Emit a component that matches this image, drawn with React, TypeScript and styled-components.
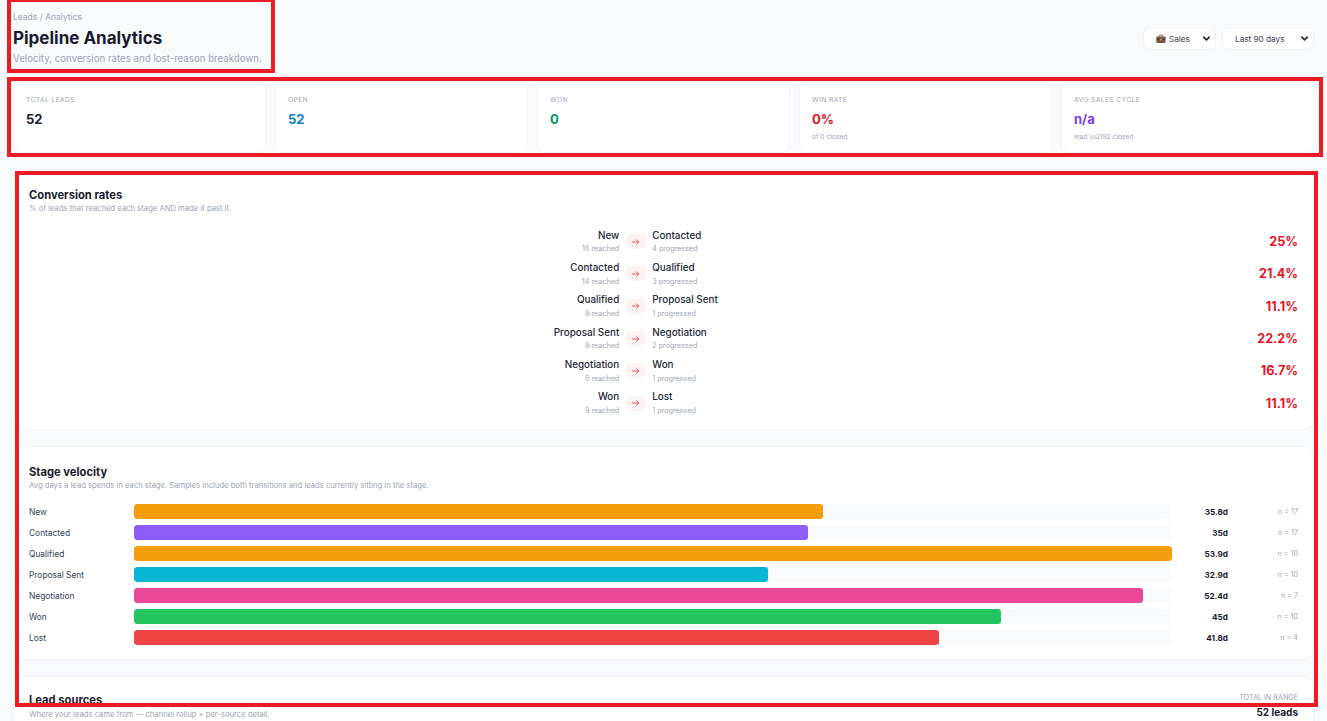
import React from 'react';
import styled, { createGlobalStyle } from 'styled-components';
import { ChevronDown } from 'lucide-react';

const GlobalStyle = createGlobalStyle`
    html, body {
        margin: 0;
        height: 721px;
        overflow: hidden;
        background: #f8fafc;
        font-family: Inter, "Liberation Sans", sans-serif;
        color: #1a1a2e;
    }
    * { box-sizing: border-box; }
`;

const conversions = [
    { from: 'New', reached: 16, to: 'Contacted', progressed: 4, rate: '25%' },
    { from: 'Contacted', reached: 14, to: 'Qualified', progressed: 3, rate: '21.4%' },
    { from: 'Qualified', reached: 9, to: 'Proposal Sent', progressed: 1, rate: '11.1%' },
    { from: 'Proposal Sent', reached: 9, to: 'Negotiation', progressed: 2, rate: '22.2%' },
    { from: 'Negotiation', reached: 6, to: 'Won', progressed: 1, rate: '16.7%' },
    { from: 'Won', reached: 9, to: 'Lost', progressed: 1, rate: '11.1%' },
];

const velocity = [
    { stage: 'New', days: 35.8, n: 17, color: '#f59e0b' },
    { stage: 'Contacted', days: 35, n: 17, color: '#8b5cf6' },
    { stage: 'Qualified', days: 53.9, n: 10, color: '#f59e0b' },
    { stage: 'Proposal Sent', days: 32.9, n: 10, color: '#06b6d4' },
    { stage: 'Negotiation', days: 52.4, n: 7, color: '#ec4899' },
    { stage: 'Won', days: 45, n: 10, color: '#22c55e' },
    { stage: 'Lost', days: 41.8, n: 4, color: '#ef4444' },
];

const maxDays = Math.max(...velocity.map((v) => v.days));

const Briefcase = () => (
    <svg width="10" height="10" viewBox="0 0 10 10">
        <path d="M3.2 2.6V1.6c0-.3.2-.5.5-.5h2.6c.3 0 .5.2.5.5v1" fill="none" stroke="#5d4037" strokeWidth="0.8" />
        <rect x="0.4" y="2.5" width="9.2" height="6.6" rx="0.8" fill="#795548" />
        <rect x="0.4" y="5.2" width="9.2" height="0.7" fill="#4e342e" />
        <rect x="4.2" y="4.7" width="1.6" height="1.6" rx="0.3" fill="#d7b98a" />
    </svg>
);

const App = () => {
    return (
        <Page>
            <GlobalStyle />
            <Header>
                <div>
                    <Crumb>Leads / Analytics</Crumb>
                    <Title>Pipeline Analytics</Title>
                    <Subtitle>Velocity, conversion rates and lost-reason breakdown.</Subtitle>
                </div>
                <Filters>
                    <Picker $width={73}>
                        <PickerLabel><Briefcase /> Sales</PickerLabel>
                        <ChevronDown size={11} strokeWidth={3.4} color="#1f2937" />
                    </Picker>
                    <Picker $width={92}>
                        <PickerLabel>Last 90 days</PickerLabel>
                        <ChevronDown size={11} strokeWidth={3.4} color="#1f2937" />
                    </Picker>
                </Filters>
            </Header>

            <Stats>
                <StatCard>
                    <StatLabel>TOTAL LEADS</StatLabel>
                    <StatValue $color="#1a1a2e">52</StatValue>
                </StatCard>
                <StatCard>
                    <StatLabel>OPEN</StatLabel>
                    <StatValue $color="#0284c7">52</StatValue>
                </StatCard>
                <StatCard>
                    <StatLabel>WON</StatLabel>
                    <StatValue $color="#059669">0</StatValue>
                </StatCard>
                <StatCard>
                    <StatLabel>WIN RATE</StatLabel>
                    <StatValue $color="#e5141f">0%</StatValue>
                    <StatNote>of 0 closed</StatNote>
                </StatCard>
                <StatCard>
                    <StatLabel>AVG SALES CYCLE</StatLabel>
                    <StatValue $color="#7c3aed">n/a</StatValue>
                    <StatNote>lead \u2192 closed</StatNote>
                </StatCard>
            </Stats>

            <Panel $height={261}>
                <PanelTitle>Conversion rates</PanelTitle>
                <PanelHint>% of leads that reached each stage AND made it past it.</PanelHint>
                <ConversionList>
                    {conversions.map((c) => (
                        <ConversionRow key={c.from}>
                            <Side $right>
                                <StageName>{c.from}</StageName>
                                <StageCount>{c.reached} reached</StageCount>
                            </Side>
                            <ArrowChip>
                                <svg width="9" height="8" viewBox="0 0 9 8" fill="none" stroke="#ef4444" strokeWidth="0.9">
                                    <path d="M0.8 4h7M5.2 1.4 7.8 4 5.2 6.6" />
                                </svg>
                            </ArrowChip>
                            <Side>
                                <StageName>{c.to}</StageName>
                                <StageCount>{c.progressed} progressed</StageCount>
                            </Side>
                            <Rate>{c.rate}</Rate>
                        </ConversionRow>
                    ))}
                </ConversionList>
            </Panel>

            <Panel $height={214}>
                <PanelTitle>Stage velocity</PanelTitle>
                <PanelHint>Avg days a lead spends in each stage. Samples include both transitions and leads currently sitting in the stage.</PanelHint>
                <VelocityList>
                    {velocity.map((v) => (
                        <VelocityRow key={v.stage}>
                            <VelocityStage>{v.stage}</VelocityStage>
                            <Track>
                                <Fill $color={v.color} style={{ width: `${(v.days / maxDays) * 100}%` }} />
                            </Track>
                            <Days>{v.days}d</Days>
                            <Samples>n = {v.n}</Samples>
                        </VelocityRow>
                    ))}
                </VelocityList>
            </Panel>

            <Panel $height={120}>
                <SourcesHead>
                    <div>
                        <PanelTitle>Lead sources</PanelTitle>
                        <PanelHint>Where your leads came from — channel rollup + per-source detail.</PanelHint>
                    </div>
                    <Total>
                        <TotalLabel>TOTAL IN RANGE</TotalLabel>
                        <TotalValue>52 leads</TotalValue>
                    </Total>
                </SourcesHead>
            </Panel>

            <Marker $x={7} $y={-2} $w={268} $h={75} />
            <Marker $x={7} $y={77} $w={1316} $h={80} />
            <Marker $x={15} $y={171} $w={1303} $h={536} />
        </Page>
    );
};

export default App;

const Page = styled.div`
    position: relative;
    height: 721px;
    overflow: hidden;
    padding: 0 13px;
`;

const Header = styled.div`
    display: flex;
    justify-content: space-between;
    align-items: center;
    height: 82px;
    padding-bottom: 5px;
`;

const Crumb = styled.div`
    font-size: 8.5px;
    line-height: 12px;
    color: #9ca3b4;
    margin-bottom: 4px;
`;

const Title = styled.h1`
    margin: 0;
    font-size: 17px;
    line-height: 22px;
    font-weight: 700;
    color: #1a1a2e;
`;

const Subtitle = styled.div`
    font-size: 9.7px;
    line-height: 14px;
    margin-top: 2.5px;
    color: #9ca3b4;
`;

const Filters = styled.div`
    display: flex;
    gap: 6px;
`;

const Picker = styled.div<{ $width: number }>`
    display: flex;
    align-items: center;
    justify-content: space-between;
    width: ${(p) => p.$width}px;
    height: 23px;
    padding: 0 3px 0 12px;
    background: #fff;
    border: 1px solid #eef1f5;
    border-radius: 7px;
`;

const PickerLabel = styled.span`
    display: flex;
    align-items: center;
    gap: 3px;
    font-size: 8.2px;
    color: #374151;
`;

const Stats = styled.div`
    display: grid;
    grid-template-columns: repeat(5, 1fr);
    gap: 9px;
    margin-bottom: 16px;
`;

const StatCard = styled.div`
    height: 71px;
    padding: 13px 12px 0;
    background: #fff;
    border: 1px solid #f1f4f8;
    border-radius: 8px;
`;

const StatLabel = styled.div`
    font-size: 6.7px;
    line-height: 9px;
    letter-spacing: 0.4px;
    color: #9ca3b4;
`;

const StatValue = styled.div<{ $color: string }>`
    font-size: 13px;
    line-height: 18px;
    font-weight: 700;
    margin-top: 5px;
    color: ${(p) => p.$color};
`;

const StatNote = styled.div`
    font-size: 6.7px;
    line-height: 10px;
    margin-top: 4px;
    color: #9ca3b4;
`;

const Panel = styled.section<{ $height: number }>`
    height: ${(p) => p.$height}px;
    flex-shrink: 0;
    margin-bottom: 16px;
    padding: 17.5px 15px 0;
    background: #fff;
    border: 1px solid #f1f4f8;
    border-radius: 10px;
`;

const PanelTitle = styled.h2`
    margin: 0;
    font-size: 11.2px;
    line-height: 14px;
    font-weight: 700;
    color: #1a1a2e;
`;

const PanelHint = styled.div`
    font-size: 7.65px;
    line-height: 10px;
    margin-top: 2.5px;
    color: #9ca3b4;
`;

const ConversionList = styled.div`
    display: flex;
    flex-direction: column;
    margin-top: 11.5px;
`;

const ConversionRow = styled.div`
    display: grid;
    grid-template-columns: 1fr 20px 1fr 49px;
    column-gap: 6.5px;
    align-items: center;
    height: 32.3px;
`;

const Side = styled.div<{ $right?: boolean }>`
    text-align: ${(p) => (p.$right ? 'right' : 'left')};
`;

const StageName = styled.div`
    font-size: 9.9px;
    line-height: 13px;
    font-weight: 500;
    color: #1e293b;
`;

const StageCount = styled.div`
    font-size: 7.2px;
    line-height: 10px;
    margin-top: 2.5px;
    color: #9ca3b4;
`;

const ArrowChip = styled.div`
    display: flex;
    align-items: center;
    justify-content: center;
    width: 20px;
    height: 15px;
    background: #fef2f2;
    border-radius: 5px;
`;

const Rate = styled.div`
    font-size: 12.6px;
    font-weight: 700;
    text-align: right;
    color: #e5141f;
`;

const VelocityList = styled.div`
    display: flex;
    flex-direction: column;
    gap: 6px;
    margin-top: 13px;
`;

const VelocityRow = styled.div`
    display: grid;
    grid-template-columns: 105px 1038px 56px 70px;
    align-items: center;
    height: 15px;
`;

const VelocityStage = styled.div`
    font-size: 8.4px;
    color: #334155;
`;

const Track = styled.div`
    height: 15px;
    background: #f8fafc;
    border-radius: 3px;
    overflow: hidden;
`;

const Fill = styled.div<{ $color: string }>`
    height: 100%;
    border-radius: 3px;
    background: ${(p) => p.$color};
`;

const Days = styled.div`
    font-size: 8.2px;
    font-weight: 700;
    text-align: right;
    color: #1a1a2e;
`;

const Samples = styled.div`
    font-size: 7.2px;
    text-align: right;
    color: #9ca3b4;
`;

const SourcesHead = styled.div`
    display: flex;
    justify-content: space-between;
    align-items: flex-end;
    margin-top: -1.5px;
`;

const Total = styled.div`
    text-align: right;
    margin-bottom: 1px;
`;

const TotalLabel = styled.div`
    font-size: 7.2px;
    line-height: 10px;
    color: #9ca3b4;
`;

const TotalValue = styled.div`
    font-size: 10px;
    line-height: 13px;
    font-weight: 700;
    margin-top: 2.5px;
    color: #1a1a2e;
`;

const Marker = styled.div<{ $x: number; $y: number; $w: number; $h: number }>`
    position: absolute;
    left: ${(p) => p.$x}px;
    top: ${(p) => p.$y}px;
    width: ${(p) => p.$w}px;
    height: ${(p) => p.$h}px;
    border: 4px solid #ed1c24;
    pointer-events: none;
`;
